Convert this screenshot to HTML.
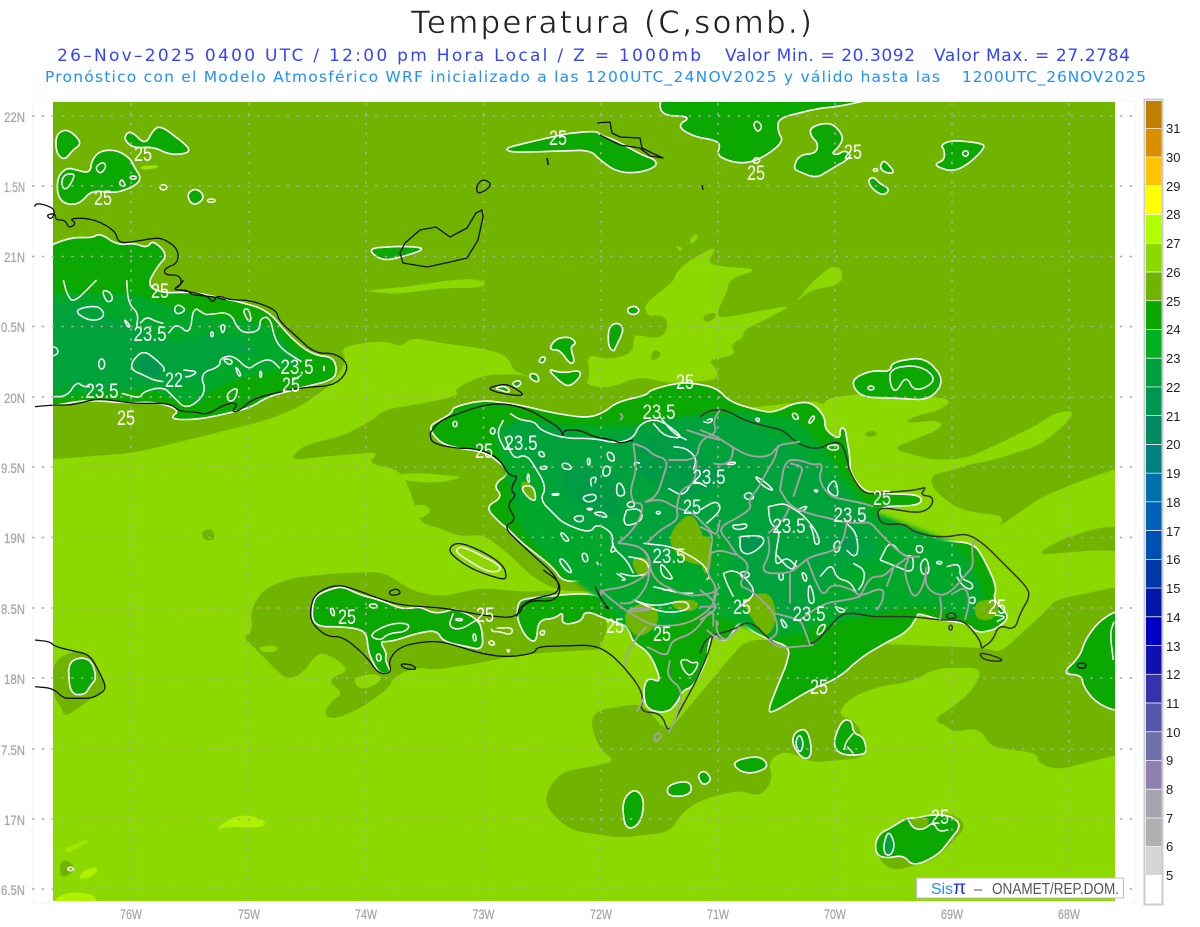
<!DOCTYPE html>
<html><head><meta charset="utf-8"><title>Temperatura</title>
<style>
html,body{margin:0;padding:0;background:#fff;width:1200px;height:927px;overflow:hidden}
svg{display:block}
svg polygon,svg polyline,svg path,svg ellipse,svg line{vector-effect:non-scaling-stroke}
text{font-family:"Liberation Sans",sans-serif;white-space:pre}
.hd{font-family:"DejaVu Sans",sans-serif}
.d{fill:#70b400}.l{fill:#8cd900}.y{fill:#aef200}
.c{fill:#0aa800;stroke:#fff;stroke-width:1.6;stroke-linejoin:round}
.cf{fill:#0aa800}
.s3{fill:#00a82a;filter:url(#b)}.s2{fill:#00a23a;filter:url(#b)}.s1{fill:#009650;filter:url(#b)}.s0{fill:#009c44;filter:url(#b)}
.w{fill:none;stroke:#fff;stroke-width:1.5;stroke-linejoin:round}
.k{fill:none;stroke:#111;stroke-width:1.3;stroke-linejoin:round}
.kg{fill:none;stroke:#333;stroke-width:1.5;stroke-linejoin:round}
.g{fill:none;stroke:#a3a3a3;stroke-width:1.9;stroke-linejoin:round}
.lb text{fill:#fff;font-size:21px;text-anchor:middle}
.ax text{fill:#a8a8a8;font-size:14px;stroke:#a8a8a8;stroke-width:.3}
.lg text{fill:#222;font-size:13px}
</style></head><body>
<svg width="1200" height="927" viewBox="0 0 1200 927" xmlns="http://www.w3.org/2000/svg">
<defs><clipPath id="m"><rect x="53" y="102" width="1062" height="799"/></clipPath>
<filter id="b" x="-10%" y="-10%" width="120%" height="120%"><feGaussianBlur stdDeviation="2"/></filter></defs>
<rect x="33" y="101" width="1102" height="802" fill="none" stroke="#f6f6f6"/>

<!-- Title -->
<text class="hd" x="411" y="33" font-size="31" textLength="401" lengthAdjust="spacing" fill="#222" stroke="#fff" stroke-width=".6">Temperatura (C,somb.)</text>
<g class="hd" fill="#3344ff" font-size="17">
<text class="hd" x="57" y="61" textLength="644" lengthAdjust="spacing">26–Nov–2025 0400 UTC / 12:00 pm Hora Local / Z = 1000mb</text>
<text class="hd" x="725" y="61" textLength="190" lengthAdjust="spacing">Valor Min. = 20.3092</text>
<text class="hd" x="934" y="61" textLength="196" lengthAdjust="spacing">Valor Max. = 27.2784</text>
</g>
<g fill="#1e90ff" font-size="15.5">
<text class="hd" x="45" y="82" textLength="895" lengthAdjust="spacing">Pronóstico con el Modelo Atmosférico WRF inicializado a las 1200UTC_24NOV2025 y válido hasta las</text>
<text class="hd" x="962" y="82" textLength="184" lengthAdjust="spacing">1200UTC_26NOV2025</text>
</g>

<g clip-path="url(#m)">
<rect x="53" y="102" width="1062" height="799" class="d"/>
<!-- c26 main -->
<polygon class="l" points="45,460 67,458 133,453 200,437 267,420 300,407 333,383 347,360 340,348 367,342 390,342 400,347 412,337 440,343 480,348 507,355 513,370 522,374 640,420 820,400 977,542 1040,498 1083,480 1125,466 1125,915 45,915"/>
<g transform="translate(700,400) scale(.3333)">
<polygon class="l" points="360,0 480,-20 560,-8 660,-15 760,0 720,30 640,50 610,70 720,60 725,85 640,120 575,145 640,165 700,180 800,175 920,120 1020,70 1060,40 1125,30 1100,70 1020,135 880,180 800,195 760,210 690,225 700,270 780,330 920,350 880,400 830,425 500,400 400,100"/>
<polygon class="d" points="490,100 520,90 535,105 505,112"/>
</g>
<g transform="translate(340,220) scale(.3333)">
<polygon class="l" points="1135,75 1050,120 1010,155 1000,185 910,255 925,290 960,283 985,305 975,345 945,355 895,345 880,350 880,400 800,420 740,400 750,470 735,495 810,505 890,470 1000,490 1130,480 1135,450 1100,420 1190,405 1170,375 1215,350 1205,335 1360,255 1140,295 1130,275 1160,220 1170,175 1240,155 1235,145 1150,140 1100,130"/>
<polygon class="d" points="940,385 965,400 955,415 930,425"/>
<polygon class="d" points="1085,290 1125,275 1130,290 1100,310"/>
<polygon class="l" points="1480,135 1510,155 1500,195 1410,210 1365,250 1400,205 1440,165"/>
<polygon class="l" points="1050,55 1070,40 1075,55 1050,75"/>
<polygon class="l" points="1005,75 1030,85 1020,95"/>
<polygon class="l" points="72,212 200,200 350,178 415,178 440,192 420,203 300,205 170,222 120,218"/>
</g>
<!-- c25 patches -->
<polygon class="d" points="293,455 305,445 345,435 373,420 383,410 430,402 460,395 453,390 483,375 522,374 640,420 640,560 600,592 555,590 530,575 510,555 483,534 460,537 437,527 420,523 410,490 400,470 367,463 380,452 330,456 293,460"/>
<polygon class="l" points="420,473 466,477 437,483 420,482 400,480 398,474"/>
<polygon class="l" points="420,503 433,510 420,520 408,510"/>
<polygon class="d" points="250,612 262,590 290,578 340,573 385,572 410,590 440,597 480,588 530,592 555,590 610,620 600,650 590,650 540,653 507,657 480,663 433,670 417,667 393,677 390,687 363,707 333,720 323,713 333,700 343,693 330,683 333,677 350,670 330,655 317,653 303,673 287,680 273,667 257,650 243,638 253,630"/>
<polygon class="l" points="355,677 377,673 383,680 365,690 355,685"/>
<polygon class="l" points="258,647 277,645 277,652 262,652"/>
<polygon class="d" points="720,670 745,640 780,640 987,648 1000,653 1047,610 1055,600 1125,585 1125,753 1057,770 1038,763 1037,753 990,747 980,728 952,732 950,728 932,720 953,707 973,690 983,668 937,668 910,682 877,687 850,698 837,715 855,720 868,747 863,758 810,763 787,750 768,760 773,780 760,797 740,790 700,800 680,815 670,832 620,838 570,830 548,810 545,795 560,772 600,765 615,760 600,750 590,723 597,710 643,703 667,733"/>
<polygon class="d" points="1125,527 1100,527 1060,540 1035,555 1100,550 1125,552"/>
<g transform="translate(40,630) scale(.3333)">
<polygon class="d" points="40,90 110,60 150,75 180,130 200,175 120,230 75,262 62,230 40,200"/>
<polygon class="d" points="60,695 80,690 110,715 80,740 60,740"/>
<polygon class="y" points="520,600 580,560 630,555 680,575 665,592 620,593 570,590"/>
<polygon class="y" points="115,745 130,720 175,710 165,735 130,748"/>
<polygon class="y" points="30,825 60,795 110,785 170,797 165,825"/>
<polygon fill="#a0e800" points="68,658 140,628 145,635 85,670"/>
</g>
<polygon class="d" points="200,532 212,528 216,538 206,542"/>
<polygon class="d" points="872,848 900,820 950,812 968,825 935,860 890,872"/>
<polygon fill="#a0e800" points="140,166 158,165 158,168 142,170"/>

<!-- Cuba -->
<polygon class="c" points="45,247 73,237 92,238 100,233 117,245 134,243 147,248 153,240 168,255 157,267 147,285 161,293 193,292 240,302 267,310 293,340 313,355 333,357 337,370 333,380 300,388 267,397 250,408 207,418 183,420 170,418 180,410 157,402 127,403 87,400 45,407"/>
<g transform="translate(0,280) scale(.3333)">
<polygon class="s3" points="140,40 400,40 480,70 640,110 800,130 880,210 920,250 700,300 620,340 600,380 450,330 140,350"/>
<polygon class="s2" points="140,80 220,60 380,130 500,190 640,160 720,180 800,220 700,220 620,270 600,320 460,310 360,330 220,310 140,330"/>
<polygon class="s1" points="410,240 440,220 490,270 470,290 430,285"/>
<polyline class="w" points="150,350 200,350 230,305 250,320 270,320"/>
<polyline class="w" points="365,340 420,355 430,335 490,320 520,350 560,390 620,340 600,280 660,260 660,235 700,225 745,270 770,250 810,235 840,265"/>
<polyline class="w" points="905,285 880,300"/>
<polyline class="w" points="380,0 385,70 415,100 410,140"/>
<polyline class="w" points="420,130 440,110 470,125 490,130"/>
<polyline class="w" points="505,160 530,130 570,165 580,80 610,100 620,105 690,95 715,150 745,160 780,150 780,115 810,110 825,180 850,210 880,230 905,245"/>
<polyline class="w" points="190,0 200,40 220,70 290,0"/>
<polygon class="w" points="220,90 290,75 315,100 300,120 260,120"/>
<polygon class="w" points="305,30 330,35 340,60 320,68"/>
<polygon class="w" points="522,85 535,72 560,90 530,105"/>
<polyline class="w" points="490,275 495,265 470,240 430,210 395,245 395,270 430,285 460,300 490,305"/>
<polyline class="w" points="550,270 595,275 570,290 555,290"/>
<polygon class="w" points="665,235 700,240 690,258"/>
<polygon class="w" points="705,255 725,285 715,290"/>
<polygon class="w" points="728,90 745,85 755,120 745,125"/>
<polygon class="w" points="660,135 678,135 668,165"/>
<polygon class="w" points="370,115 390,135 385,145"/>
<ellipse class="w" cx="305" cy="252" rx="9" ry="15"/>
<ellipse class="w" cx="636" cy="163" rx="4" ry="7"/>
<ellipse class="w" cx="782" cy="283" rx="3" ry="9"/>
<ellipse cx="972" cy="265" rx="3" ry="9" fill="#fff"/>
<polyline class="w" points="160,200 172,205 175,220 160,228"/>
<polygon class="w" points="680,340 715,320 705,360 685,365"/>
</g>

<!-- top left shapes -->
<g transform="scale(.3827,.3333)">
<polygon class="c" points="145,430 150,400 175,387 205,415 210,435 190,450 170,480 150,465"/>
<polygon class="c" points="330,400 345,395 380,435 400,390 420,377 470,420 495,445 490,460 445,465 400,440 350,445 325,420"/>
<polygon class="c" points="150,530 175,503 200,510 235,520 240,480 262,452 305,450 340,475 350,500 370,535 350,560 300,580 240,570 210,610 175,615 150,590"/>
<polygon class="w" points="160,560 165,525 190,520 195,530 175,570"/>
<polygon class="w" points="250,500 270,485 278,500 265,520 255,515"/>
<polygon class="w" points="310,555 318,535 330,560"/>
<ellipse class="w" cx="348" cy="533" rx="8" ry="5"/>
<ellipse class="w" cx="427" cy="562" rx="9" ry="8"/>
<polygon class="c" points="490,580 510,565 530,580 530,600 510,615 495,605"/>
<ellipse class="w" cx="552" cy="602" rx="10" ry="5"/>
</g>
<!-- top shapes -->
<polygon class="c" points="505,148 530,142 552,137 570,133 597,131 600,135 615,140 642,155 656,160 656,167 638,173 617,172 600,160 590,150 560,151 530,152 510,152"/>
<g transform="translate(600,0) scale(.3827,.3333)">
<polygon class="c" points="160,280 155,345 240,350 200,378 245,410 300,420 315,435 305,465 340,485 385,490 430,470 480,425 465,395 465,355 570,325 620,320 720,296 740,280"/>
<polygon class="w" points="400,375 410,360 425,380 412,398"/>
<polygon class="w" points="397,485 408,470 420,480 410,492"/>
<polygon class="c" points="548,385 580,370 610,372 637,410 625,440 605,460 620,465 640,450 660,470 600,510 565,535 520,515 505,505 520,465 565,460 570,430 552,410"/>
<polygon class="c" points="740,480 755,495 770,518 750,520 730,505"/>
<ellipse class="w" cx="720" cy="510" rx="6" ry="4"/>
<polygon class="c" points="700,540 715,530 730,550 755,565 750,580 735,585 710,565"/>
<polygon class="c" points="890,435 920,420 1000,430 1005,445 960,495 920,515 880,500 878,490 900,480 900,450"/>
<polygon class="w" points="945,460 955,450 965,460 955,472"/>
</g>
<!-- small central islands -->
<g transform="translate(340,220) scale(.3333)">
<polygon class="c" points="80,85 190,78 262,85 190,110 125,123"/>
<polygon class="c" points="630,380 650,355 690,350 710,370 690,380 705,425 690,433 660,390 635,390"/>
<polygon class="c" points="605,410 618,412 610,430 595,425"/>
<polygon class="c" points="620,445 665,460 720,450 722,470 690,500 665,490"/>
<polygon class="c" points="570,460 590,462 598,480 590,487 570,475"/>
<polygon class="c" points="515,490 535,480 545,490 530,503"/>
<polygon class="c" points="862,265 885,257 900,272 885,285 865,280"/>
<polygon class="c" points="805,325 825,308 845,315 850,335 825,385 822,395 805,380"/>
<polygon class="c" points="465,505 490,497 510,510 505,518 480,510"/>
</g>
<polygon class="c" points="850,380 872,370 890,372 892,362 925,357 945,380 930,400 890,398 860,397"/>
<polygon class="w" points="890,368 920,365 938,380 915,393 906,375 896,393 890,385"/>
<ellipse class="w" cx="871" cy="388" rx="3" ry="2"/>

<!-- Hispaniola -->
<polygon class="c" points="428,427 440,420 452,413 453,407 483,400 520,405 553,413 587,418 603,413 617,402 647,395 650,390 677,383 693,383 717,388 730,402 757,410 773,413 797,402 813,403 825,417 825,430 840,440 840,428 845,428 847,440 850,457 850,473 863,490 873,493 921,495 921,505 878,507 878,525 903,525 933,540 973,543 983,557 997,587 993,600 1007,613 1007,620 998,627 993,630 977,633 967,623 940,620 918,613 917,617 907,632 887,642 860,658 840,677 810,690 772,713 768,710 780,680 787,663 790,647 770,640 750,630 740,620 730,637 722,642 712,633 708,647 707,660 693,687 683,690 677,703 667,713 647,710 643,693 647,677 662,683 650,653 633,642 630,633 625,625 607,620 610,600 597,583 587,580 563,582 553,567 522,543 507,528 500,523 485,507 503,497 493,485 510,473 500,463 485,452 457,448 440,443"/>
<g transform="translate(300,570) scale(.3333)">
<polygon class="c" points="655,95 680,85 780,75 860,70 925,85 1000,125 1040,130 1040,190 975,165 925,150 855,120 845,155 785,165 790,125 765,145 715,150 710,210 695,215 670,190 650,140"/>
<polygon class="c" points="60,70 100,55 130,50 180,75 240,90 300,115 330,115 360,110 400,130 440,125 460,115 510,135 530,150 545,170 550,240 500,230 430,215 410,180 350,190 290,210 260,215 240,215 260,250 255,270 275,310 240,312 220,280 205,245 200,190 170,175 110,170 60,170 35,150 40,90"/>
<polygon class="w" points="240,213 265,190 320,185 330,160 270,160 205,195"/>
<polyline class="w" points="460,130 445,170 480,180 530,150"/>
<polygon class="w" points="575,170 600,175 625,172 640,180 630,195 600,185 575,185"/>
<polygon class="w" points="565,215 580,212 585,225 570,225"/>
<polygon class="w" points="620,238 630,240 625,248"/>
<polygon class="w" points="465,147 485,145 488,152 470,152"/>
<polygon class="w" points="518,195 525,190 530,210 522,215"/>
<polygon class="w" points="720,185 735,180 732,195 722,195"/>
<polygon class="w" points="205,105 225,100 235,112 215,115"/>
<polygon class="w" points="90,115 100,115 105,138 95,135"/>
<polygon class="w" points="228,255 240,250 245,270 232,275"/>
<polygon class="w" points="1140,270 1160,268 1175,280 1195,275 1190,295 1170,320 1150,300"/>
</g>
<!-- Inner shading -->
<polygon class="s3" points="490,425 560,425 640,425 740,410 800,420 840,470 870,510 960,545 985,590 980,620 920,605 800,630 780,640 700,610 640,640 600,600 560,570 520,530 505,470"/>
<polygon class="s2" points="505,437 513,460 527,453 547,487 540,500 553,513 563,523 590,533 597,523 613,533 612,547 627,560 640,580 670,560 680,520 720,530 735,570 760,620 790,630 810,610 840,570 880,555 875,530 845,490 800,450 770,435 745,420 700,415 660,420 590,440 540,420 510,420"/>
<polygon class="s1" points="637,460 653,458 667,477 653,483 640,473"/>
<polygon class="s1" points="740,537 762,535 765,543 750,555 740,552"/>
<polygon class="s1" points="847,528 857,547 850,557 842,545"/>
<polygon class="s1" points="828,483 837,490 827,490"/>
<polygon class="s0" points="560,465 620,470 620,520 570,500"/>
<polygon class="s0" points="630,440 680,430 730,480 690,500 660,490"/>
<polygon class="s3" points="793,620 810,620 810,635 795,635"/>
<!-- c25 patches inside -->
<polygon class="d" points="677,523 693,512 710,553 707,567 680,560 668,540"/>
<polygon class="d" points="523,480 533,485 537,503 528,498 520,487"/>
<polygon class="d" points="630,557 650,558 652,575 638,578"/>
<polygon class="d" points="700,533 713,540 710,575 702,572"/>
<polygon class="d" points="625,610 650,600 662,620 640,640 625,625"/>
<polygon class="d" points="740,600 770,590 778,620 765,640 750,615"/>
<polygon class="d" points="670,600 700,600 695,612 675,610"/>
<polygon class="d" points="490,590 510,597 510,620 490,632 480,615"/>
<polygon class="d" points="975,600 1000,600 995,620 975,620"/>

<!-- Others: south isles -->
<g transform="translate(760,600) scale(.3333)">
<polygon class="c" points="1085,25 1020,60 975,120 960,170 905,222 965,225 970,260 1010,310 1085,340"/>
<polyline class="w" points="1062,65 1050,100 1060,180"/>
<polygon class="c" points="95,430 105,395 140,385 155,440 150,475 125,475"/>
<polygon class="s2" points="105,430 118,400 132,430 120,462"/>
<polygon class="w" points="105,430 118,400 132,430 120,462"/>
<polygon class="c" points="218,430 245,360 275,360 280,400 310,410 320,450 310,465 240,465"/>
<polyline class="w" points="252,450 258,425 280,400"/>
<polyline class="w" points="280,460 262,440"/>
</g>
<polygon class="c" points="730,762 760,755 770,768 745,775"/>
<polygon class="c" points="697,775 705,770 712,780 703,786"/>
<polygon class="c" points="667,785 690,780 692,795 668,797"/>
<polygon class="c" points="622,800 635,788 645,800 640,825 625,830"/>
<g transform="translate(880,780) scale(.3333)">
<polygon class="c" points="-15,190 0,160 30,145 70,120 85,115 110,115 145,105 210,105 245,135 210,180 175,225 100,260 70,225 20,235 -10,225"/>
<polygon class="s2" points="10,195 25,150 45,190 35,225 15,225"/>
<polygon class="w" points="10,195 25,150 45,190 35,225 15,225"/>
<polygon class="d" points="85,118 140,110 150,125 130,150 100,140"/>
<polyline class="w" points="85,120 100,145 130,150 160,125 175,155 205,150"/>
</g>
<polygon class="c" points="68,660 90,657 97,678 90,686 85,695 70,694"/>
<g transform="translate(40,630) scale(.3333)"><ellipse class="w" cx="92" cy="717" rx="9" ry="5"/></g>

<!-- Interior contours -->
<g transform="translate(420,380) scale(.3333)">
<polyline class="w" points="270,100 300,120 345,125 360,150 430,175 520,175 590,190 640,175 660,130 715,115 795,175 735,170 700,130"/>
<polyline class="w" points="255,170 280,240 320,220 380,320 360,360 400,400 430,430 510,460 530,430 580,460 575,500 620,540 640,580"/>
<polyline class="w" points="625,530 680,540 690,580 640,590 600,580"/>
<polygon class="w" points="325,275 330,310 320,300"/>
<polygon class="w" points="300,320 340,315 350,365 325,355"/>
<polyline class="w" points="250,120 230,160 255,210"/>
<ellipse class="w" cx="105" cy="132" rx="6" ry="8"/>
<ellipse class="w" cx="218" cy="153" rx="7" ry="9"/>
<polygon class="w" points="355,215 370,215 375,230 360,230"/>
<polygon class="w" points="360,260 382,258 378,268 362,268"/>
<polygon class="w" points="425,250 445,250 458,268 430,268"/>
<polygon class="w" points="502,235 510,235 510,255 503,255"/>
<polygon class="w" points="560,215 580,220 585,245 565,240"/>
<polygon class="w" points="550,260 570,258 570,285 548,290"/>
<polyline class="w" points="515,320 510,295 530,290 525,310"/>
<polygon class="w" points="395,342 415,340 418,345 398,346"/>
<polygon class="w" points="485,350 525,340 530,360 500,368"/>
<polygon class="w" points="590,310 605,310 618,345 590,350"/>
<polygon class="w" points="620,370 640,362 645,380 625,382"/>
<polygon class="w" points="460,410 490,405 490,425 468,425"/>
<polygon class="w" points="520,398 550,395 565,415 530,405"/>
<polygon class="w" points="498,385 520,385 510,392"/>
<polygon class="w" points="420,460 430,458 450,482 435,485"/>
<polygon class="w" points="485,520 500,520 505,545 490,545"/>
<polygon class="w" points="415,540 430,535 460,580 440,575"/>
<polyline class="w" points="620,390 660,385 670,420 620,440 610,420 620,390"/>
<polygon class="w" points="720,545 750,580 760,600 725,590"/>
<polyline class="w" points="660,250 640,245 650,270"/>
<ellipse class="w" cx="715" cy="398" rx="6" ry="4"/>
<polyline class="w" points="760,200 800,205 830,235 820,270"/>
<polyline class="w" points="720,110 760,160 800,180"/>
<polyline class="w" points="580,490 570,520 590,510"/>
<polyline class="w" points="530,545 535,555"/>
<polyline class="w" points="670,490 760,500 850,550 870,590 860,600"/>
<polyline class="w" points="860,320 820,300 790,350 745,325"/>
<polyline class="w" points="590,580 620,600 605,600"/>
<polyline class="w" points="640,660 700,680 800,660 810,690 730,700 640,660"/>
<polyline class="w" points="700,620 780,640 820,640"/>
<polyline class="w" points="740,620 760,630 730,630"/>
</g>
<g transform="translate(700,400) scale(.3333)">
<polyline class="w" points="205,320 250,310 270,320 310,345 350,395 360,430 345,435 340,400 330,375"/>
<polyline class="w" points="205,320 210,370 240,395 230,440 225,500 260,470 290,500"/>
<polyline class="w" points="120,410 185,405 195,430 150,465 120,455 120,410"/>
<polygon class="w" points="130,285 150,275 165,295 140,300"/>
<polygon class="w" points="160,225 195,245 225,275 190,260"/>
<polygon class="w" points="290,330 325,315 310,335"/>
<polygon class="w" points="410,250 400,240 380,265 395,285 415,290"/>
<polygon class="w" points="400,430 420,420 420,450 405,460"/>
<polyline class="w" points="440,370 470,400 475,460 460,470 440,450"/>
<polygon class="w" points="95,375 115,375 140,370 140,385 105,390"/>
<polygon class="w" points="70,190 110,185 100,195"/>
<polygon class="w" points="235,520 250,520 250,540 238,540"/>
<polygon class="w" points="305,515 320,525 320,545 310,540"/>
<polygon class="w" points="325,555 335,560 345,610 325,610"/>
<polygon class="w" points="355,680 378,670 370,695 350,708"/>
<polyline class="w" points="360,530 395,490 410,535 450,545 470,580"/>
<polyline class="w" points="460,490 495,510 490,550 475,570"/>
<polyline class="w" points="540,480 570,420 610,470 640,465 640,520 590,500 540,480"/>
<polygon class="w" points="660,490 680,470 690,520 665,525"/>
<polygon class="w" points="650,435 670,440 665,460 648,455"/>
<ellipse class="w" cx="718" cy="488" rx="8" ry="4"/>
<polyline class="w" points="740,500 780,490 780,535 820,550 815,570 790,560 770,530"/>
<polygon class="w" points="805,595 825,590 825,610 810,610"/>
<polyline class="w" points="70,520 100,510 135,530 170,580 120,620"/>
<polygon class="w" points="120,515 145,515 150,530 125,535"/>
<polyline class="w" points="70,520 80,550 100,590"/>
<polyline class="w" points="230,465 260,500 280,510 290,480"/>
<polyline class="w" points="0,330 50,300 65,330 20,370"/>
<polygon class="w" points="240,650 265,680 250,685"/>
<polyline class="w" points="405,620 440,630 420,640 405,620"/>
<polyline class="w" points="885,645 920,650 890,665"/>
<polygon class="w" points="380,140 395,135 415,135 415,150 390,150"/>
<polygon class="w" points="275,40 290,40 297,58 282,58"/>
<polygon class="w" points="325,65 340,45 345,55 330,72"/>
<polygon class="w" points="165,55 180,55 175,68"/>
<polygon class="w" points="340,270 355,270 350,278"/>
<polyline class="w" points="20,60 40,55 30,70 10,65"/>
</g>

<!-- Gonave -->
<g transform="translate(420,380) scale(.3333)">
<polygon class="w" points="110,505 130,500 240,555 240,575 200,575 110,520"/>
</g>
</g>

<!-- Grid -->
<g stroke="#aaa" stroke-width="1.6" stroke-dasharray="2.4 7.4" fill="none">
<path d="M32 116H1136M32 186H1136M32 256.5H1136M32 326.5H1136M32 397H1136M32 467H1136M32 537.5H1136M32 608H1136M32 678H1136M32 749H1136M32 819H1136M32 889H1136"/>
<path d="M131 103V901M249 103V901M366 103V901M483.5 103V901M601 103V901M718 103V901M835 103V901M952 103V901M1069 103V901"/>
</g>

<!-- Coast -->
<g transform="scale(.3827,.3333)">
<polyline class="k" points="90,620 95,610 120,615 145,630 135,660 120,645 145,640 145,660 170,660 180,685 200,670 180,655 240,655 300,690 310,730 350,725 400,715 425,715 465,745 465,790 430,805 430,825 470,825 475,855 450,870 490,870 500,885 560,890 590,900"/>
<polygon class="k" points="1262,535 1288,555 1250,585 1243,560"/>
<polyline class="k" points="1430,475 1433,495"/>
</g>
<g transform="translate(0,280) scale(.3333)">
<polyline class="k" points="525,25 545,10 550,0"/>
<polyline class="k" points="525,28 620,45 640,70 650,45 690,60 750,60 830,90 835,120 890,170 945,220 1010,220 1050,260 1010,315 890,325 760,355 715,395 695,395 715,370 680,370 620,405 585,395 540,395 510,370 400,370 290,355 220,375 160,375 105,380"/>
</g>
<path class="k" d="M482 210 L483 217 478 240 467 258 450 262 427 267 403 263 400 253 405 243 420 230 436 227 450 237 467 228 476 213Z"/>
<path class="k" d="M597 123 L610 122 612 133 620 137 640 138 642 148 650 152 663 158 650 156 640 148 620 145 600 135"/>
<path class="k" d="M547 158 L548 165M702 185 L703 190"/>
<g transform="translate(40,630) scale(.3333)">
<polyline class="k" points="-15,30 30,35 45,50 110,65 150,75 180,130 200,175 175,195 150,205 100,205 70,205 40,175 -15,170"/>
</g>
<g transform="translate(420,380) scale(.3333)">
<polyline class="k" points="30,160 60,120 190,75 260,70 330,90 380,120 420,145 430,170 430,150 480,150 520,170 580,180 600,190 640,180"/>
<polyline class="k" points="30,160 35,190 110,205 150,205 200,215 240,240 270,290 295,285 270,330 290,345 260,375 290,420 250,440 300,490 410,590 420,640 340,655 300,680 290,710"/>
<polygon class="k" points="85,505 115,485 190,515 250,555 260,590 250,600 160,570 100,530"/>
<polygon class="k" points="200,25 245,13 270,15 322,50 240,40"/>
</g>
<g transform="translate(300,570) scale(.3333)">
<polyline class="k" points="730,0 785,40 770,95 680,90 650,145 540,135 440,115 300,105 235,85 170,60 110,42 45,70 30,120 35,160 80,200 130,200 200,260 235,312 275,310 265,270 300,230 370,215 430,215 540,250 620,262 705,250 710,230 880,225 930,250 970,290"/>
<polyline class="kg" points="970,290 1015,345 1030,385 1020,425 1085,430 1105,490 1130,440 1190,330 1225,250 1240,190"/>
<polygon class="k" points="300,280 340,285 350,300 310,295"/>
<polygon class="k" points="265,65 290,55 305,70 275,78"/>
<polyline class="k" points="885,50 905,90 930,120 915,110"/>
</g>
<g transform="translate(700,400) scale(.3333)">
<polyline class="kg" points="0,50 30,30 80,30 130,60 200,80 250,90 290,130 350,150 400,125 425,130 440,170 450,220 490,280 530,280 650,270 680,260 660,285 700,290 695,320 660,340 530,320 540,375 610,370 640,395 700,410 750,410 800,400 850,430 980,560 990,590 960,640 945,690 895,675 880,720 845,745"/>
<polyline class="kg" points="0,760 20,710 100,690 150,660 210,720 240,745 340,735 390,680 430,635 520,650 540,650 640,650 720,660 770,660 800,670 840,720 845,745"/>
<polygon class="kg" points="835,755 905,775 905,785 850,780"/>
<polygon class="kg" points="740,640 765,640 770,655 740,655"/>
<ellipse class="kg" cx="752" cy="683" rx="5" ry="7"/>
</g>
<g transform="translate(760,600) scale(.3333)"><polygon class="k" points="950,190 980,190 975,205 955,205"/></g>

<!-- Gray borders -->
<g transform="translate(700,400) scale(.3333)">
<polyline class="g" points="0,90 50,110 95,140 150,170 210,170 235,135 270,130 300,125"/>
<polyline class="g" points="100,140 95,180 70,195 40,190"/>
<polyline class="g" points="235,135 225,175 200,215 175,265 145,300 155,325 110,355 70,375 60,395 85,425 110,465 140,485 145,510 115,555 150,570 175,590 225,640 235,700 205,720"/>
<polyline class="g" points="240,270 255,180 300,180 340,195 370,190 355,240 390,290 440,300 490,310 520,320"/>
<polyline class="g" points="240,270 270,320 340,345 390,355 420,365 480,370 510,365 540,400 600,460 630,470 610,510 640,600 670,560 680,500"/>
<polyline class="g" points="280,290 300,230 310,200 270,190"/>
<polyline class="g" points="110,465 60,450 30,460"/>
<polyline class="g" points="205,400 250,360 270,320"/>
<polyline class="g" points="205,410 210,460 180,520 270,520 300,495 330,470 410,450 430,420 440,370"/>
<polyline class="g" points="320,475 345,540 370,590 395,550 460,570 480,590 550,560 550,600 530,630"/>
<polyline class="g" points="480,590 510,530 550,530 575,505 600,490 625,470 660,470"/>
<polyline class="g" points="680,500 675,560 720,590 760,570 800,520 820,500 815,430 830,425"/>
<polyline class="g" points="720,590 725,630 720,660"/>
<polyline class="g" points="760,580 795,560 810,600 795,660"/>
<polyline class="g" points="580,505 560,560"/>
<polyline class="g" points="270,520 270,610"/>
<polyline class="g" points="225,640 300,660 310,680 330,735"/>
<polyline class="g" points="300,660 370,610 440,600 480,590"/>
<polyline class="g" points="0,570 40,600 50,630 0,660"/>
<polyline class="g" points="50,620 0,620"/>
<polyline class="g" points="50,660 50,700 75,720"/>
<polyline class="g" points="0,380 40,400 30,460 20,520 50,560 40,600"/>
<polyline class="g" points="205,720 240,745 340,735"/>
</g>
<g transform="translate(420,380) scale(.3333)">
<polyline class="g" points="640,190 650,270 630,330 640,370 670,370 660,420 620,470 590,490 610,490 660,500 690,530 690,580 620,620 550,630 540,640"/>
<polyline class="g" points="640,190 680,205 700,225 745,240 730,290 710,350 665,370 720,355 770,385 815,395 860,440 890,470 900,420"/>
<polyline class="g" points="770,385 775,420 720,450 680,490"/>
<polyline class="g" points="670,510 685,530 700,600 800,650 880,640 900,620"/>
<polyline class="g" points="745,240 830,240 840,180 890,160 880,120 900,90"/>
<polyline class="g" points="830,240 825,310 780,330 770,385"/>
<polyline class="g" points="600,100 610,110 600,120"/>
<polyline class="g" points="800,150 860,170 900,180"/>
</g>
<g transform="translate(300,570) scale(.3333)">
<polyline class="g" points="960,100 1000,100 1040,50 1050,0"/>
<polyline class="g" points="900,60 960,110 1040,160 1090,170 1170,160 1240,110 1250,60"/>
<polyline class="g" points="1040,230 1100,260 1110,230 1120,210 1180,190 1240,110 1240,170"/>
<polyline class="g" points="1020,190 980,250 975,290"/>
<polyline class="g" points="1020,190 1040,170"/>
<polyline class="g" points="1110,270 1100,320 1150,360 1130,440 1105,490"/>
<polyline class="g" points="1220,180 1270,220 1320,170"/>
<polygon class="g" points="1075,485 1085,500 1070,515 1060,505"/>
<polygon class="g" points="985,120 1010,115 1060,115 1030,122 990,125"/>
<polyline class="g" points="1010,425 1020,410 1030,385"/>
</g>

<!-- Labels -->
<g class="lb">
<text x="143" y="161" textLength="18" lengthAdjust="spacingAndGlyphs">25</text>
<text x="103" y="205" textLength="18" lengthAdjust="spacingAndGlyphs">25</text>
<text x="160" y="298" textLength="18" lengthAdjust="spacingAndGlyphs">25</text>
<text x="150" y="341" textLength="33" lengthAdjust="spacingAndGlyphs">23.5</text>
<text x="174" y="387" textLength="18" lengthAdjust="spacingAndGlyphs">22</text>
<text x="102" y="398" textLength="33" lengthAdjust="spacingAndGlyphs">23.5</text>
<text x="126" y="425" textLength="18" lengthAdjust="spacingAndGlyphs">25</text>
<text x="297" y="374" textLength="33" lengthAdjust="spacingAndGlyphs">23.5</text>
<text x="291" y="392" textLength="18" lengthAdjust="spacingAndGlyphs">25</text>
<text x="558" y="145" textLength="18" lengthAdjust="spacingAndGlyphs">25</text>
<text x="756" y="180" textLength="18" lengthAdjust="spacingAndGlyphs">25</text>
<text x="853" y="159" textLength="18" lengthAdjust="spacingAndGlyphs">25</text>
<text x="685" y="389" textLength="18" lengthAdjust="spacingAndGlyphs">25</text>
<text x="659" y="419" textLength="33" lengthAdjust="spacingAndGlyphs">23.5</text>
<text x="521" y="450" textLength="33" lengthAdjust="spacingAndGlyphs">23.5</text>
<text x="484" y="458" textLength="18" lengthAdjust="spacingAndGlyphs">25</text>
<text x="709" y="484" textLength="33" lengthAdjust="spacingAndGlyphs">23.5</text>
<text x="692" y="514" textLength="18" lengthAdjust="spacingAndGlyphs">25</text>
<text x="789" y="533" textLength="33" lengthAdjust="spacingAndGlyphs">23.5</text>
<text x="850" y="522" textLength="33" lengthAdjust="spacingAndGlyphs">23.5</text>
<text x="882" y="505" textLength="18" lengthAdjust="spacingAndGlyphs">25</text>
<text x="669" y="563" textLength="33" lengthAdjust="spacingAndGlyphs">23.5</text>
<text x="347" y="624" textLength="18" lengthAdjust="spacingAndGlyphs">25</text>
<text x="485" y="622" textLength="18" lengthAdjust="spacingAndGlyphs">25</text>
<text x="615" y="633" textLength="18" lengthAdjust="spacingAndGlyphs">25</text>
<text x="662" y="641" textLength="18" lengthAdjust="spacingAndGlyphs">25</text>
<text x="742" y="614" textLength="18" lengthAdjust="spacingAndGlyphs">25</text>
<text x="809" y="621" textLength="33" lengthAdjust="spacingAndGlyphs">23.5</text>
<text x="997" y="614" textLength="18" lengthAdjust="spacingAndGlyphs">25</text>
<text x="819" y="694" textLength="18" lengthAdjust="spacingAndGlyphs">25</text>
<text x="940" y="824" textLength="18" lengthAdjust="spacingAndGlyphs">25</text>
</g>

<!-- Axis labels -->
<g class="ax" text-anchor="end">
<text x="25" y="122" textLength="21" lengthAdjust="spacingAndGlyphs">22N</text>
<text x="25" y="192" textLength="21" lengthAdjust="spacingAndGlyphs">1.5N</text>
<text x="25" y="262" textLength="21" lengthAdjust="spacingAndGlyphs">21N</text>
<text x="25" y="332" textLength="24" lengthAdjust="spacingAndGlyphs">0.5N</text>
<text x="25" y="403" textLength="21" lengthAdjust="spacingAndGlyphs">20N</text>
<text x="25" y="473" textLength="24" lengthAdjust="spacingAndGlyphs">9.5N</text>
<text x="25" y="543" textLength="21" lengthAdjust="spacingAndGlyphs">19N</text>
<text x="25" y="614" textLength="24" lengthAdjust="spacingAndGlyphs">8.5N</text>
<text x="25" y="684" textLength="21" lengthAdjust="spacingAndGlyphs">18N</text>
<text x="25" y="755" textLength="24" lengthAdjust="spacingAndGlyphs">7.5N</text>
<text x="25" y="825" textLength="21" lengthAdjust="spacingAndGlyphs">17N</text>
<text x="25" y="895" textLength="24" lengthAdjust="spacingAndGlyphs">6.5N</text>
</g>
<g class="ax" text-anchor="middle">
<text x="131" y="919" textLength="22" lengthAdjust="spacingAndGlyphs">76W</text>
<text x="249" y="919" textLength="22" lengthAdjust="spacingAndGlyphs">75W</text>
<text x="366" y="919" textLength="22" lengthAdjust="spacingAndGlyphs">74W</text>
<text x="483.5" y="919" textLength="22" lengthAdjust="spacingAndGlyphs">73W</text>
<text x="601" y="919" textLength="22" lengthAdjust="spacingAndGlyphs">72W</text>
<text x="718" y="919" textLength="22" lengthAdjust="spacingAndGlyphs">71W</text>
<text x="835" y="919" textLength="22" lengthAdjust="spacingAndGlyphs">70W</text>
<text x="952" y="919" textLength="22" lengthAdjust="spacingAndGlyphs">69W</text>
<text x="1069" y="919" textLength="22" lengthAdjust="spacingAndGlyphs">68W</text>
</g>

<!-- Legend -->
<rect x="1144.5" y="99.5" width="18" height="805" fill="#fff" stroke="#ccc" stroke-width="2"/>
<g>
<rect x="1146" y="101" width="15.5" height="27" fill="#bf8000"/>
<rect x="1146" y="128.7" width="15.5" height="28" fill="#d99000"/>
<rect x="1146" y="157.4" width="15.5" height="28" fill="#ffc400"/>
<rect x="1146" y="186.2" width="15.5" height="28" fill="#ffff00"/>
<rect x="1146" y="214.9" width="15.5" height="28" fill="#b0ff00"/>
<rect x="1146" y="243.6" width="15.5" height="28" fill="#8cd900"/>
<rect x="1146" y="272.4" width="15.5" height="28" fill="#70b400"/>
<rect x="1146" y="301.1" width="15.5" height="28" fill="#08a800"/>
<rect x="1146" y="329.8" width="15.5" height="28" fill="#00b020"/>
<rect x="1146" y="358.6" width="15.5" height="28" fill="#00a03c"/>
<rect x="1146" y="387.3" width="15.5" height="28" fill="#009650"/>
<rect x="1146" y="416" width="15.5" height="28" fill="#008a64"/>
<rect x="1146" y="444.8" width="15.5" height="28" fill="#008080"/>
<rect x="1146" y="473.5" width="15.5" height="28" fill="#0070a8"/>
<rect x="1146" y="502.2" width="15.5" height="28" fill="#0060b8"/>
<rect x="1146" y="531" width="15.5" height="28" fill="#0050b0"/>
<rect x="1146" y="559.7" width="15.5" height="28" fill="#0038a8"/>
<rect x="1146" y="588.4" width="15.5" height="28" fill="#0018a8"/>
<rect x="1146" y="617.2" width="15.5" height="28" fill="#0000c0"/>
<rect x="1146" y="645.9" width="15.5" height="28" fill="#1010b0"/>
<rect x="1146" y="674.6" width="15.5" height="28" fill="#3333aa"/>
<rect x="1146" y="703.4" width="15.5" height="28" fill="#5555aa"/>
<rect x="1146" y="732.1" width="15.5" height="28" fill="#7070aa"/>
<rect x="1146" y="760.8" width="15.5" height="28" fill="#9080b0"/>
<rect x="1146" y="789.6" width="15.5" height="28" fill="#a5a5b0"/>
<rect x="1146" y="818.3" width="15.5" height="28" fill="#b0b0b0"/>
<rect x="1146" y="847" width="15.5" height="28" fill="#d5d5d5"/>
</g>
<g class="lg">
<text x="1166" y="133">31</text><text x="1166" y="162">30</text><text x="1166" y="191">29</text><text x="1166" y="219">28</text>
<text x="1166" y="248">27</text><text x="1166" y="277">26</text><text x="1166" y="306">25</text><text x="1166" y="334">24</text>
<text x="1166" y="363">23</text><text x="1166" y="392">22</text><text x="1166" y="421">21</text><text x="1166" y="449">20</text>
<text x="1166" y="478">19</text><text x="1166" y="507">18</text><text x="1166" y="536">17</text><text x="1166" y="564">16</text>
<text x="1166" y="593">15</text><text x="1166" y="622">14</text><text x="1166" y="651">13</text><text x="1166" y="679">12</text>
<text x="1166" y="708">11</text><text x="1166" y="737">10</text><text x="1166" y="765">9</text><text x="1166" y="794">8</text>
<text x="1166" y="823">7</text><text x="1166" y="851">6</text><text x="1166" y="880">5</text>
</g>

<!-- Footer box -->
<rect x="916.5" y="878" width="207" height="20" fill="#fff" stroke="#bbb"/>
<text x="931" y="894" font-size="16" fill="#1e90ff" textLength="22" lengthAdjust="spacingAndGlyphs">Sis</text>
<text x="953" y="894" font-size="19" fill="#2030e0">π</text>
<text x="974" y="894" font-size="15" fill="#555">–</text>
<text x="992" y="894" font-size="15.5" fill="#555" textLength="127" lengthAdjust="spacingAndGlyphs">ONAMET/REP.DOM.</text>
</svg>
<script>
(function(){
var L=document.querySelectorAll('svg polygon,svg polyline');
[].forEach.call(L,function(e){
var closed=e.tagName.toLowerCase()=='polygon',m=e.getCTM(),s=(m&&m.a)||1,lim=7/s;
var p=[].map.call(e.points,function(q){return [q.x,q.y]});
if(p.length<3)return;
for(var it=0;it<2;it++){
var o=[],n=p.length;
for(var i=0;i<(closed?n:n-1);i++){
var a=p[i],b=p[(i+1)%n],dx=b[0]-a[0],dy=b[1]-a[1],d=Math.sqrt(dx*dx+dy*dy)||1,t=Math.min(.25,lim/d);
o.push([a[0]+dx*t,a[1]+dy*t],[b[0]-dx*t,b[1]-dy*t]);
}
if(!closed){o.unshift(p[0]);o.push(p[n-1]);}
p=o;lim/=2;
}
e.setAttribute('points',p.map(function(c){return c[0].toFixed(1)+','+c[1].toFixed(1)}).join(' '));
});
})();
</script>
</body></html>
